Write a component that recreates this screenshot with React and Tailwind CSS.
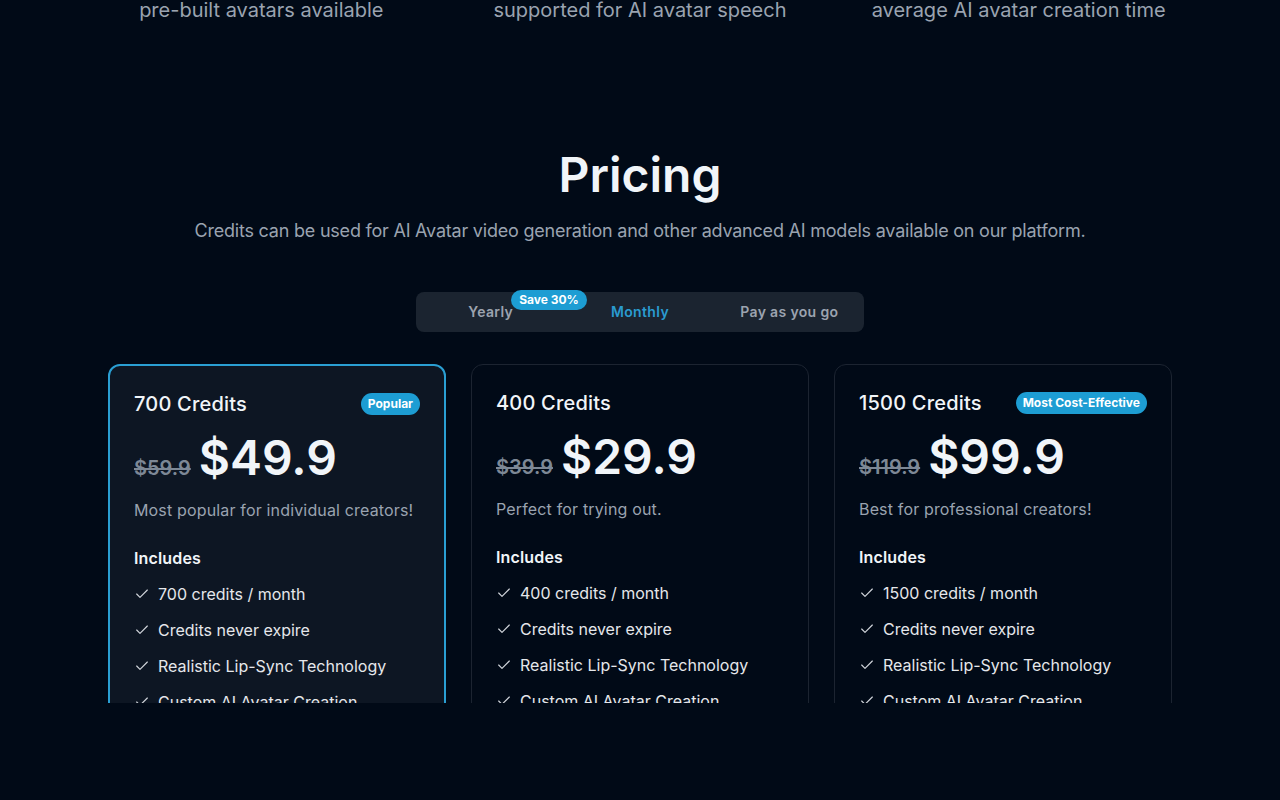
import React, { useState } from 'react';
import { Check } from 'lucide-react';

const stats = [
    'pre-built avatars available',
    'supported for AI avatar speech',
    'average AI avatar creation time',
];

const plans = [
    {
        credits: 700,
        oldPrice: '$59.9',
        price: '$49.9',
        note: 'Most popular for individual creators!',
        badge: 'Popular',
        highlight: true,
    },
    {
        credits: 400,
        oldPrice: '$39.9',
        price: '$29.9',
        note: 'Perfect for trying out.',
        badge: null,
        highlight: false,
    },
    {
        credits: 1500,
        oldPrice: '$119.9',
        price: '$99.9',
        note: 'Best for professional creators!',
        badge: 'Most Cost-Effective',
        highlight: false,
    },
];

const PlanCard = ({ plan }) => {
    const features = [
        `${plan.credits} credits / month`,
        'Credits never expire',
        'Realistic Lip-Sync Technology',
        'Custom AI Avatar Creation',
        'Multi-language speech support',
    ];
    return (
        <div
            className={
                plan.highlight
                    ? 'rounded-xl border-2 border-[#2a9fd3] bg-[#0d1623] p-6'
                    : 'rounded-xl border border-[#1c2431] bg-[#010a17] p-6'
            }
        >
            <div className="flex items-center justify-between">
                <h4 className="text-xl leading-7 font-medium tracking-[0.01em] text-[#f1f5f9]">{plan.credits} Credits</h4>
                {plan.badge && (
                    <span className="rounded-full bg-[#1d9dd3] px-[7px] py-[3px] text-xs leading-4 font-bold text-white">
                        {plan.badge}
                    </span>
                )}
            </div>
            <div className="mt-4 flex items-baseline gap-2">
                <span className="text-xl font-semibold text-[#7d8896] line-through">{plan.oldPrice}</span>
                <span className="text-5xl leading-none font-semibold text-[#f1f5f9]">{plan.price}</span>
            </div>
            <p className="mt-4 text-base leading-6 tracking-[0.01em] text-[#9aa3b0]">{plan.note}</p>
            <p className="mt-6 text-base leading-6 font-semibold tracking-[0.01em] text-[#f1f5f9]">Includes</p>
            <ul className="mt-3 flex flex-col gap-3">
                {features.map(f => (
                    <li key={f} className="flex items-center gap-2 text-base leading-6 text-[#e5e7eb]">
                        <Check size={16} strokeWidth={1.75} className="text-[#d1d5db] shrink-0" />
                        {f}
                    </li>
                ))}
            </ul>
        </div>
    );
};

const App = () => {
    const [tab, setTab] = useState('monthly');

    const tabClass = (key) =>
        'flex-1 flex items-center justify-center text-sm leading-5 font-semibold tracking-wide ' +
        (tab === key ? 'text-[#2a9bd0]' : 'text-[#9ca3af]');

    return (
        <div className="min-h-screen bg-[#010a17]" style={{ fontFamily: 'Inter, "Noto Sans", sans-serif' }}>
            <div className="h-[703px] overflow-hidden">
                <div className="mx-auto grid max-w-[1136px] grid-cols-3 text-center">
                    {stats.map(s => (
                        <p key={s} className="text-xl leading-5 text-[#9aa3b0]">{s}</p>
                    ))}
                </div>

                <section className="mx-auto mt-[131px] max-w-[1064px]">
                    <h2 className="text-center text-5xl leading-none font-semibold text-[#f1f5f9]">Pricing</h2>
                    <p className="mt-[18px] text-center text-lg leading-7 tracking-[-0.012em] text-[#9aa3b0]">
                        Credits can be used for AI Avatar video generation and other advanced AI models available on our platform.
                    </p>

                    <div className="mx-auto mt-[47px] flex h-10 w-[448px] rounded-lg bg-[#1b2430]">
                        <button onClick={() => setTab('yearly')} className={tabClass('yearly')}>
                            <span className="relative">
                                Yearly
                                <span className="absolute left-full top-[-12px] ml-[-2px] whitespace-nowrap rounded-full bg-[#1d9dd3] px-2 py-0.5 text-xs leading-4 font-bold tracking-normal text-white">
                                    Save 30%
                                </span>
                            </span>
                        </button>
                        <button onClick={() => setTab('monthly')} className={tabClass('monthly')}>
                            Monthly
                        </button>
                        <button onClick={() => setTab('payg')} className={tabClass('payg')}>
                            Pay as you go
                        </button>
                    </div>

                    <div className="mt-8 grid grid-cols-3 gap-[25px]">
                        {plans.map(p => (
                            <PlanCard key={p.credits} plan={p} />
                        ))}
                    </div>
                </section>
            </div>
        </div>
    );
};

export default App;
